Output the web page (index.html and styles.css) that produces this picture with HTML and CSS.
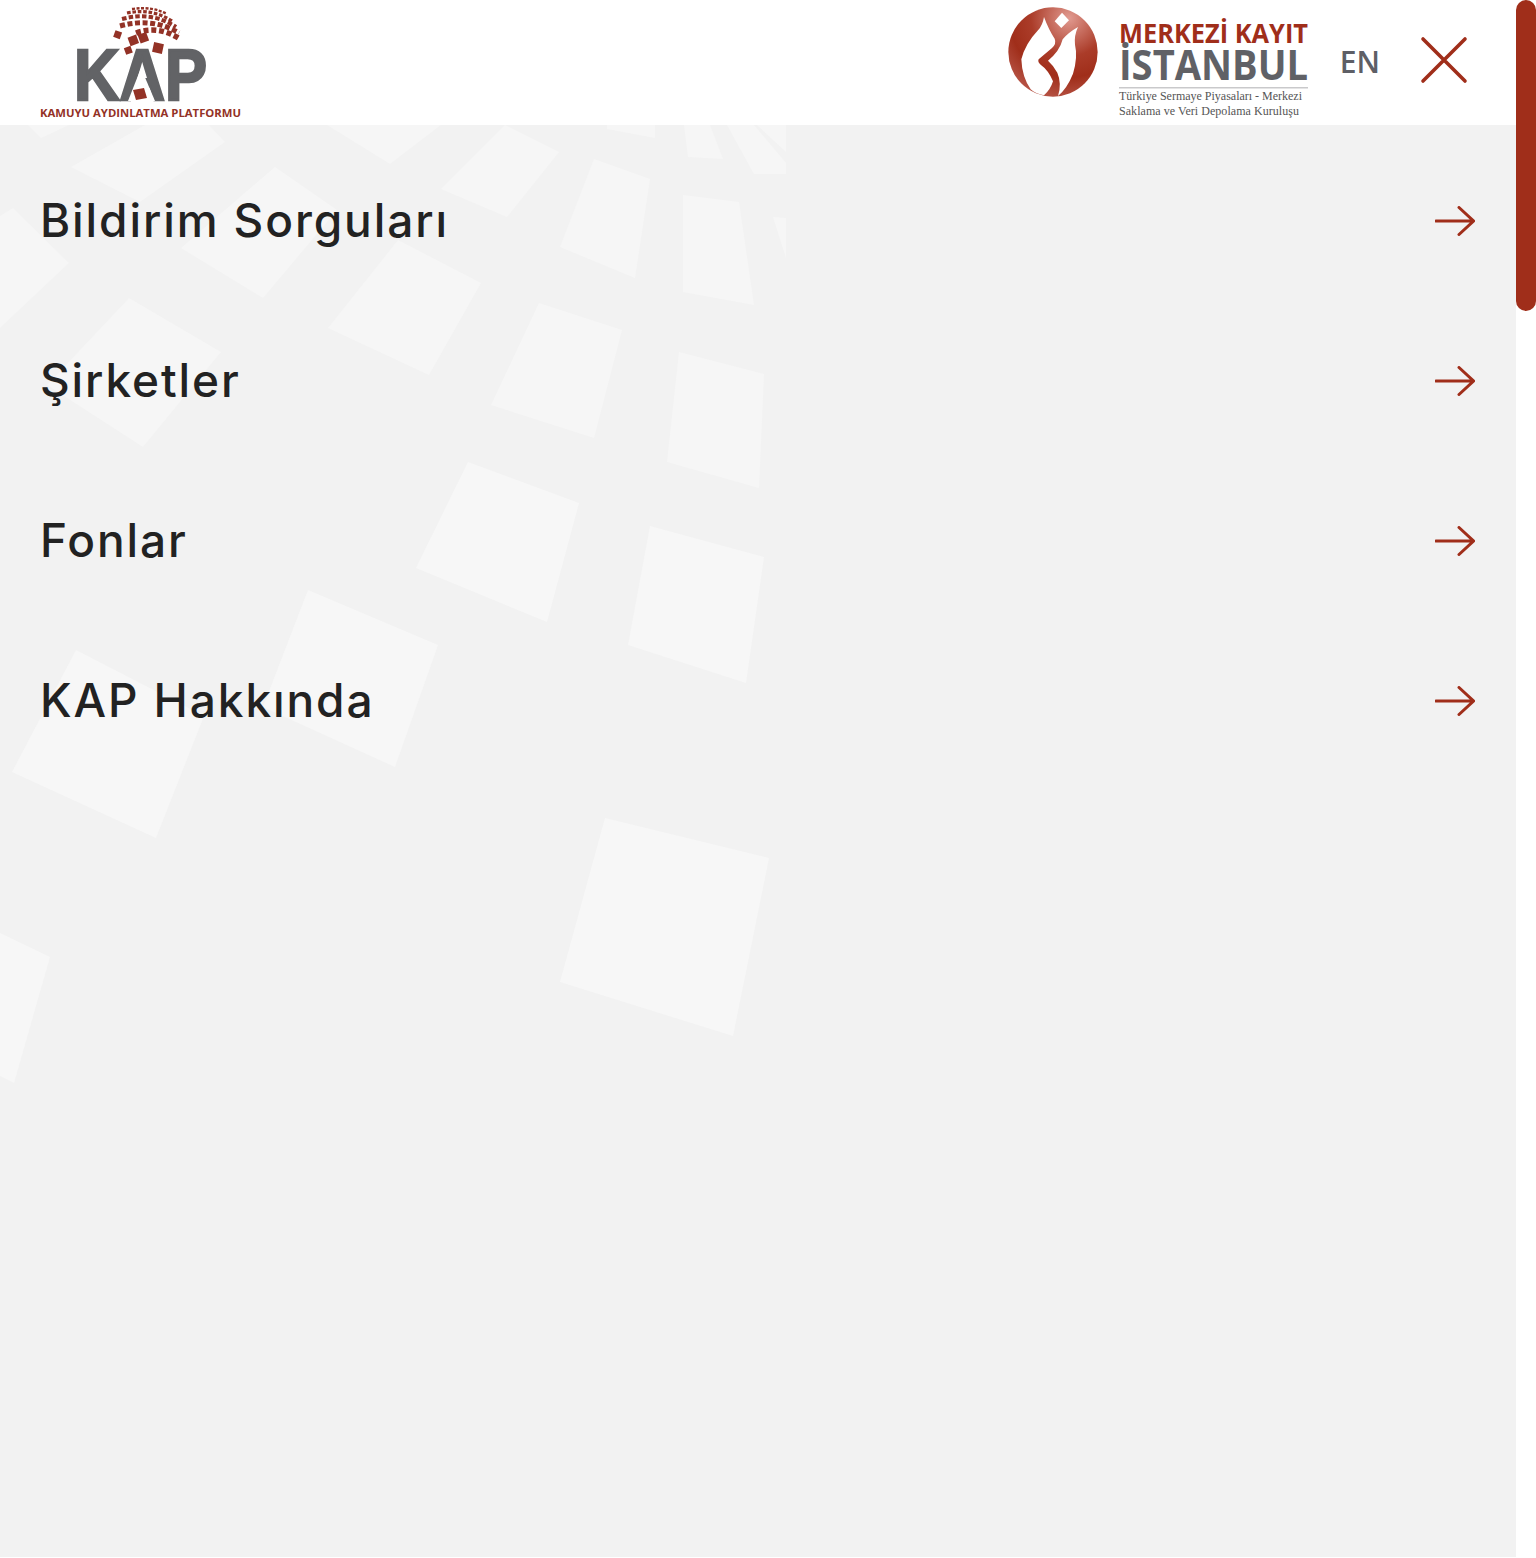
FILE: index.html
```html
<!DOCTYPE html>
<html lang="en">
<head>
    <meta charset="UTF-8">
    <meta name="viewport" content="width=device-width, initial-scale=1.0">
    <title>Kamuyu Aydınlatma Platformu</title>
    <link rel="stylesheet" href="styles.css">
</head>
<body>
    <div class="page">
        <div class="panel">
            <header class="top-bar">
                <a class="kap-logo" href="#">
                    <svg width="201" height="120" viewBox="40 0 201 120">
                        <g class="dome" fill="none" stroke="#933226">
                            <path d="M132 9 Q152 6 167 14" stroke-width="2.4" stroke-dasharray="3 1.5"/>
                            <path d="M127 13 Q152 8 172 21" stroke-width="3.2" stroke-dasharray="3.6 1.8"/>
                            <path d="M122 19 Q152 11 176 27" stroke-width="4" stroke-dasharray="4.5 2.2"/>
                            <path d="M120 26 Q152 17 179 33" stroke-width="5" stroke-dasharray="5 2.6"/>
                            <path d="M136 33 Q158 25 180 39" stroke-width="5.500" stroke-dasharray="5 2.800"/>
                        </g>
                        <g fill="#933226">
                            <rect x="114" y="31" width="7" height="7" transform="rotate(20 117 35)"/>
                            <rect x="129" y="36" width="9" height="9" transform="rotate(-20 133 41)"/>
                            <rect x="139" y="33" width="9" height="9" transform="rotate(-20 144 38)"/>
                            <rect x="125" y="47" width="7" height="7" transform="rotate(-20 128 51)"/>
                            <rect x="153" y="43" width="10" height="10" transform="rotate(12 158 48)"/>
                        </g>
                        <text class="kap-word" x="74" y="100" textLength="133" lengthAdjust="spacingAndGlyphs">KAP</text>
                        <polygon points="141,68 128,101 155,101" fill="#fff"/>
                        <polygon points="133,90 144,88 147,98 136,100" fill="#933226"/>
                        <text class="kap-caption" x="40" y="117" textLength="201" lengthAdjust="spacingAndGlyphs">KAMUYU AYDINLATMA PLATFORMU</text>
                    </svg>
                </a>
                <div class="top-right">
                    <a class="mkk-logo" href="#">
                        <svg width="90" height="90" viewBox="10 15 270 270">
                            <defs>
                                <radialGradient id="mkkBall" cx="0.68" cy="0.12" r="0.95">
                                    <stop offset="0" stop-color="#e19a90"/>
                                    <stop offset="0.45" stop-color="#ab3c29"/>
                                    <stop offset="0.7" stop-color="#a02e1a"/>
                                    <stop offset="1" stop-color="#b9584b"/>
                                </radialGradient>
                            </defs>
                            <circle cx="145" cy="150" r="134" fill="url(#mkkBall)"/>
                            <path fill="#fff" d="M118 45 Q133 85 150 110 Q156 125 142 138 L102 172 Q98 180 108 188 Q132 205 145 238 Q138 262 118 280 Q92 275 78 262 Q52 225 50 172 Q62 125 100 85 Q114 70 118 45Z"/>
                            <path fill="#fff" d="M220 75 Q208 100 211 128 Q220 165 205 215 Q188 258 160 282 Q172 245 158 212 Q146 190 130 176 Q165 148 174 112 Q190 92 220 75Z"/>
                            <polygon fill="#fff" points="172,32 193,55 170,78 150,58"/>
                        </svg>
                    </a>
                    <a class="mkk-name" href="#">
                        <svg class="mkk-art" width="190" height="100" viewBox="0 0 190 100">
                            <text class="mkk-top" x="0" y="21" textLength="189" lengthAdjust="spacingAndGlyphs">MERKEZİ KAYIT</text>
                            <text class="mkk-city" x="0" y="58" textLength="189" lengthAdjust="spacingAndGlyphs">İSTANBUL</text>
                            <rect x="0" y="65" width="189" height="1.5" fill="#c9c9cb"/>
                            <text class="mkk-sub" x="0" y="78" textLength="183" lengthAdjust="spacing">Türkiye Sermaye Piyasaları - Merkezi</text>
                            <text class="mkk-sub" x="0" y="93" textLength="180" lengthAdjust="spacing">Saklama ve Veri Depolama Kuruluşu</text>
                        </svg>
                    </a>
                    <a class="lang-link" href="#">EN</a>
                    <button class="close-btn" type="button" aria-label="Kapat">
                        <svg width="48" height="48" viewBox="0 0 48 48">
                            <path d="M3 3 L45 45 M45 3 L3 45" fill="none" stroke="#a02e1a" stroke-width="3.6" stroke-linecap="round"/>
                        </svg>
                    </button>
                </div>
            </header>

            <div class="menu-area">
                <svg class="menu-bg" width="800" height="1000" viewBox="0 125 800 1000">
                    <g fill="#f6f6f6">
                        <polygon points="28,125 41,138 69,125"/>
                        <polygon points="71,167 145,125 209,125 225,142 140,202"/>
                        <polygon points="327,125 390,164 441,125"/>
                        <polygon points="441,189 505,125 559,152 507,217"/>
                        <polygon points="594,159 650,179 635,278 560,247"/>
                        <polygon points="607,125 607,129 655,138 655,125"/>
                        <polygon points="684,125 710,125 723,159 688,157"/>
                        <polygon points="727,125 754,125 786,163 786,174 754,174"/>
                        <polygon points="757,125 786,125 786,152"/>
                        <polygon points="683,195 739,202 754,305 683,292"/>
                        <polygon points="773,217 786,218 786,258"/>
                        <polygon points="0,216 13,208 69,263 0,328"/>
                        <polygon points="275,167 337,210 263,298 181,248"/>
                        <polygon points="398,240 481,283 429,375 328,328"/>
                        <polygon points="129,298 221,352 143,447 47,385"/>
                        <polygon points="539,303 622,330 594,438 491,405"/>
                        <polygon points="679,352 764,374 759,488 667,462"/>
                    </g>
                    <g fill="#f7f7f7">
                        <polygon points="468,462 579,503 547,622 416,568"/>
                        <polygon points="650,526 764,557 746,683 628,645"/>
                        <polygon points="308,590 438,645 395,767 263,707"/>
                        <polygon points="76,650 204,716 156,838 12,772"/>
                        <polygon points="605,818 769,858 733,1036 560,982"/>
                        <polygon points="0,933 50,957 14,1083 0,1076"/>
                    </g>
                </svg>
                <nav class="main-menu">
                    <a class="menu-item" href="#">
                        <span class="menu-label">Bildirim Sorguları</span>
                        <svg class="menu-arrow" width="40" height="30" viewBox="0 0 40 30"><path d="M1 15 H38 M24 1.5 L38.500 15 L24 28.500"/></svg>
                    </a>
                    <a class="menu-item" href="#">
                        <span class="menu-label">Şirketler</span>
                        <svg class="menu-arrow" width="40" height="30" viewBox="0 0 40 30"><path d="M1 15 H38 M24 1.5 L38.500 15 L24 28.500"/></svg>
                    </a>
                    <a class="menu-item" href="#">
                        <span class="menu-label">Fonlar</span>
                        <svg class="menu-arrow" width="40" height="30" viewBox="0 0 40 30"><path d="M1 15 H38 M24 1.5 L38.500 15 L24 28.500"/></svg>
                    </a>
                    <a class="menu-item" href="#">
                        <span class="menu-label">KAP Hakkında</span>
                        <svg class="menu-arrow" width="40" height="30" viewBox="0 0 40 30"><path d="M1 15 H38 M24 1.5 L38.500 15 L24 28.500"/></svg>
                    </a>
                </nav>
            </div>
        </div>

        <div class="scroll-track">
            <div class="scroll-thumb"></div>
        </div>
    </div>
</body>
</html>
```

FILE: styles.css
```css
* {
    box-sizing: border-box;
}

html, body {
    margin: 0;
    padding: 0;
    background: #FFFFFF;
    overflow: hidden;
}

a {
    text-decoration: none;
    color: inherit;
}

svg {
    display: block;
}

.page {
    display: flex;
    height: 1558px;
    align-items: flex-start;
}

.panel {
    width: 1516px;
    height: 1557px;
    background-color: #F2F2F2;
    display: flex;
    flex-direction: column;
}

.top-bar {
    height: 125px;
    background: #FFFFFF;
    display: flex;
    justify-content: space-between;
    align-items: flex-start;
    padding-left: 40px;
    padding-right: 48px;
}

.top-right {
    display: flex;
    align-items: flex-start;
}

.mkk-logo {
    margin-top: 7px;
}

.mkk-name {
    margin-left: 21px;
    margin-top: 22px;
}

.mkk-art {
    overflow: visible;
}

.lang-link {
    margin-left: 31px;
    margin-top: 41px;
    font-family: "Open Sans", sans-serif;
    font-size: 30px;
    line-height: 41px;
    font-weight: 600;
    color: #5E5F66;
}

.close-btn {
    margin-left: 40px;
    margin-top: 36px;
    padding: 0;
    border: none;
    background: none;
    cursor: pointer;
}

.kap-word {
    font-family: "Liberation Sans", sans-serif;
    font-size: 72px;
    font-weight: 700;
    fill: #626366;
    stroke: #626366;
    stroke-width: 2.5;
}

.kap-caption {
    font-family: "Open Sans", sans-serif;
    font-size: 10.5px;
    font-weight: 700;
    fill: #933226;
}

.mkk-top {
    font-family: "Open Sans", sans-serif;
    font-size: 27px;
    font-weight: 700;
    fill: #A02E1A;
}

.mkk-city {
    font-family: "Open Sans", sans-serif;
    font-size: 41px;
    font-weight: 700;
    fill: #606166;
}

.mkk-sub {
    font-family: "Liberation Serif", serif;
    font-size: 12px;
    fill: #555555;
}

.menu-area {
    position: relative;
    flex: 1;
    overflow: hidden;
}

.menu-bg {
    position: absolute;
    top: 0;
    left: 0;
}

.main-menu {
    position: relative;
    padding-top: 15px;
}

.menu-item {
    display: flex;
    justify-content: space-between;
    align-items: center;
    height: 160px;
    padding: 0 41px 0 40px;
}

.menu-label {
    font-family: Inter, sans-serif;
    font-size: 46px;
    font-weight: 500;
    letter-spacing: 1.9px;
    color: #222222;
}

.menu-arrow {
    margin-top: 2px;
}

.menu-arrow path {
    fill: none;
    stroke: #A02E1A;
    stroke-width: 3;
    stroke-linecap: round;
}

.scroll-track {
    width: 20px;
    height: 100%;
    background: #FFFFFF;
}

.scroll-thumb {
    width: 20px;
    height: 311px;
    background: #A02E1A;
    border-radius: 10px;
}
```
